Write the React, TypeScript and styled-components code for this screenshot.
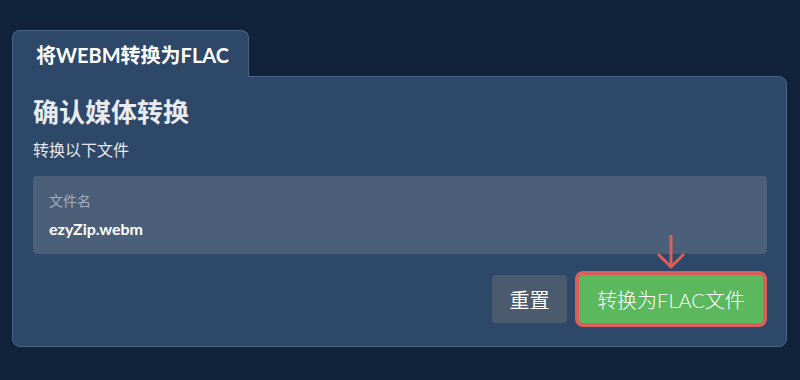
import React from 'react'
import styled, { createGlobalStyle } from 'styled-components'

const GlobalStyle = createGlobalStyle`
  body {
    margin: 0;
    background: #11233a;
    font-family: Lato, "Noto Sans CJK SC", sans-serif;
    color: #e9edf2;
  }
`;

const Page = styled.div`
  padding: 30px 13px 0 12px;
  height: 380px;
  box-sizing: border-box;
`;

const Tab = styled.div`
  position: relative;
  z-index: 1;
  display: inline-flex;
  align-items: center;
  box-sizing: border-box;
  width: 237px;
  height: 47px;
  margin-bottom: -1px;
  padding: 0 0 0 23px;
  background: #2d4868;
  border: 1px solid #4d6585;
  border-bottom: none;
  border-radius: 8px 8px 0 0;
  font-size: 20px;
  font-weight: 700;
  color: #ffffff;
`;

const Panel = styled.div`
  box-sizing: border-box;
  height: 271px;
  background: #2d4868;
  border: 1px solid #4d6585;
  border-radius: 0 8px 8px 8px;
  padding: 18px 19px 0 20px;
`;

const Heading = styled.h2`
  margin: 0;
  font-size: 26px;
  font-weight: 700;
  line-height: 34px;
  color: #e8ebef;
`;

const Sub = styled.p`
  margin: 10px 0 0;
  font-size: 16px;
  line-height: 22px;
  color: #e4e8ee;
`;

const Field = styled.div`
  margin-top: 15px;
  height: 78px;
  box-sizing: border-box;
  padding: 15px 16px 0;
  background: #4b5f78;
  border-radius: 4px;
`;

const FieldLabel = styled.div`
  font-size: 14px;
  line-height: 20px;
  color: #a3aebc;
`;

const FieldValue = styled.div`
  margin-top: 7px;
  font-size: 16px;
  font-weight: 700;
  line-height: 22px;
  color: #ffffff;
`;

const Actions = styled.div`
  display: flex;
  justify-content: flex-end;
  gap: 12px;
  margin-top: 21px;
  padding-right: 4px;
`;

const Button = styled.button<{ $variant: 'reset' | 'primary' }>`
  position: relative;
  height: 48px;
  padding: 0;
  border: none;
  border-radius: 4px;
  font-family: Lato, "Noto Sans CJK SC", sans-serif;
  font-size: 20px;
  font-weight: ${p => p.$variant === 'primary' ? 300 : 400};
  color: #ffffff;
  cursor: pointer;
  background: ${p => p.$variant === 'primary' ? '#5cb85c' : '#4b5a6c'};
  width: ${p => p.$variant === 'primary' ? '184px' : '75px'};
  box-shadow: ${p => p.$variant === 'primary' ? '0 0 0 4px #d9605a' : 'none'};
`;

const Arrow = styled.svg`
  position: absolute;
  left: 50%;
  top: -43px;
  transform: translateX(-50%);
`;

export default function App() {
  return (
    <Page>
      <GlobalStyle />
      <Tab>将WEBM转换为FLAC</Tab>
      <Panel>
        <Heading>确认媒体转换</Heading>
        <Sub>转换以下文件</Sub>
        <Field>
          <FieldLabel>文件名</FieldLabel>
          <FieldValue>ezyZip.webm</FieldValue>
        </Field>
        <Actions>
          <Button $variant="reset">重置</Button>
          <Button $variant="primary">
            <Arrow width="32" height="38" viewBox="0 0 32 38">
              <path d="M16 3 V35 M3 22 L16 35 L29 22" fill="none" stroke="#d9605a" strokeWidth="3" />
            </Arrow>
            转换为FLAC文件
          </Button>
        </Actions>
      </Panel>
    </Page>
  )
}
